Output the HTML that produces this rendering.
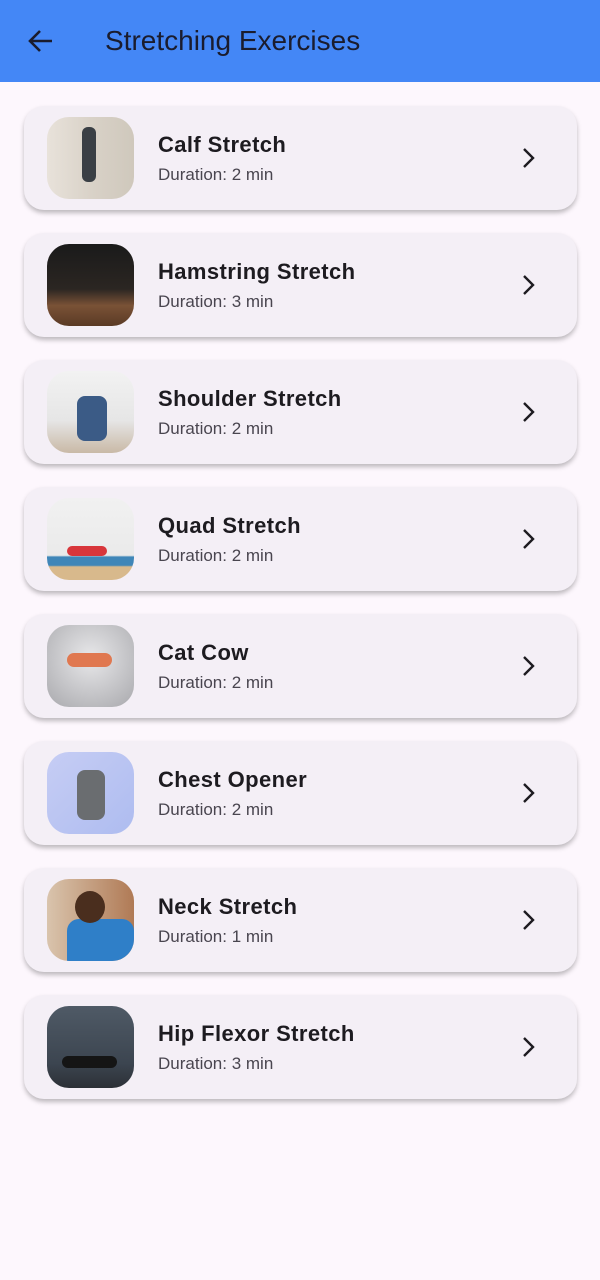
<!DOCTYPE html>
<html><head><meta charset="utf-8"><style>
*{margin:0;padding:0;box-sizing:border-box}
body{width:600px;height:1280px;background:#fdf7fd;font-family:"Liberation Sans",sans-serif;position:relative;overflow:hidden}
.bar{position:absolute;left:0;top:0;width:600px;height:82px;background:#4487f6}
.bar h1{position:absolute;left:105px;top:25px;font-size:28px;font-weight:400;color:#1a1c2e;letter-spacing:0px}
.bar svg{position:absolute;left:27px;top:28px}
.card{position:absolute;left:24px;width:553px;height:104px;background:#f4eff6;border-radius:20px;box-shadow:0 3px 5px rgba(0,0,0,.25)}
.img{position:absolute;left:23px;top:11px;width:87px;height:82px;border-radius:22px;overflow:hidden}
.t{position:absolute;left:134px;top:26px;font-size:22px;font-weight:700;color:#1d1b20;letter-spacing:.4px}
.d{position:absolute;left:134px;top:59px;font-size:17px;color:#49454f}
.c{position:absolute;left:497px;top:40px}
</style></head><body>
<div class="bar"><svg width="28" height="26" viewBox="0 0 28 26"><path d="M25 13H4M13 3L3 13l10 10" stroke="#1a1c2e" stroke-width="2.6" fill="none"/></svg><h1>Stretching Exercises</h1></div>

<div class="card" style="top:106px"><div class="img" style="background:linear-gradient(90deg,#e8e2da,#d9d2c8 50%,#cfc8bc);"><div style="position:absolute;left:35px;top:10px;width:14px;height:55px;background:#3a3f45;border-radius:6px"></div></div><div class="t">Calf Stretch</div><div class="d">Duration: 2 min</div><svg class="c" width="16" height="24"><path d="M3 3l9 9-9 9" stroke="#1d1b20" stroke-width="2.4" fill="none"/></svg></div>

<div class="card" style="top:233px"><div class="img" style="background:linear-gradient(180deg,#1a1a1a 0%,#2b2622 55%,#7a5236 75%,#5a3a25)"></div><div class="t">Hamstring Stretch</div><div class="d">Duration: 3 min</div><svg class="c" width="16" height="24"><path d="M3 3l9 9-9 9" stroke="#1d1b20" stroke-width="2.4" fill="none"/></svg></div>

<div class="card" style="top:360px"><div class="img" style="background:linear-gradient(180deg,#f2f2f2,#e6e6e6 60%,#c9b9a6)"><div style="position:absolute;left:30px;top:25px;width:30px;height:45px;background:#3b5b86;border-radius:8px"></div></div><div class="t">Shoulder Stretch</div><div class="d">Duration: 2 min</div><svg class="c" width="16" height="24"><path d="M3 3l9 9-9 9" stroke="#1d1b20" stroke-width="2.4" fill="none"/></svg></div>

<div class="card" style="top:487px"><div class="img" style="background:linear-gradient(180deg,#f1f1f1 0%,#eaeaea 70%,#3f86b8 72%,#3f86b8 82%,#d8b98c 84%)"><div style="position:absolute;left:20px;top:48px;width:40px;height:10px;background:#d8363b;border-radius:5px"></div></div><div class="t">Quad Stretch</div><div class="d">Duration: 2 min</div><svg class="c" width="16" height="24"><path d="M3 3l9 9-9 9" stroke="#1d1b20" stroke-width="2.4" fill="none"/></svg></div>

<div class="card" style="top:614px"><div class="img" style="background:radial-gradient(circle at 50% 40%,#e8e8ea,#a9a9ad)"><div style="position:absolute;left:20px;top:28px;width:45px;height:14px;background:#e07850;border-radius:7px"></div></div><div class="t">Cat Cow</div><div class="d">Duration: 2 min</div><svg class="c" width="16" height="24"><path d="M3 3l9 9-9 9" stroke="#1d1b20" stroke-width="2.4" fill="none"/></svg></div>

<div class="card" style="top:741px"><div class="img" style="background:linear-gradient(135deg,#c6cdf4,#aebcf0)"><div style="position:absolute;left:30px;top:18px;width:28px;height:50px;background:#6a6d70;border-radius:8px"></div></div><div class="t">Chest Opener</div><div class="d">Duration: 2 min</div><svg class="c" width="16" height="24"><path d="M3 3l9 9-9 9" stroke="#1d1b20" stroke-width="2.4" fill="none"/></svg></div>

<div class="card" style="top:868px"><div class="img" style="background:linear-gradient(90deg,#d9c4ad,#b07a55)"><div style="position:absolute;left:20px;top:40px;width:67px;height:42px;background:#2f7fc8;border-radius:12px 12px 0 0"></div><div style="position:absolute;left:28px;top:12px;width:30px;height:32px;background:#4a2e1e;border-radius:50%"></div></div><div class="t">Neck Stretch</div><div class="d">Duration: 1 min</div><svg class="c" width="16" height="24"><path d="M3 3l9 9-9 9" stroke="#1d1b20" stroke-width="2.4" fill="none"/></svg></div>

<div class="card" style="top:995px"><div class="img" style="background:linear-gradient(180deg,#4f5a66,#3c4550 70%,#2c3036)"><div style="position:absolute;left:15px;top:50px;width:55px;height:12px;background:#151515;border-radius:6px"></div></div><div class="t">Hip Flexor Stretch</div><div class="d">Duration: 3 min</div><svg class="c" width="16" height="24"><path d="M3 3l9 9-9 9" stroke="#1d1b20" stroke-width="2.4" fill="none"/></svg></div>
</body></html>
